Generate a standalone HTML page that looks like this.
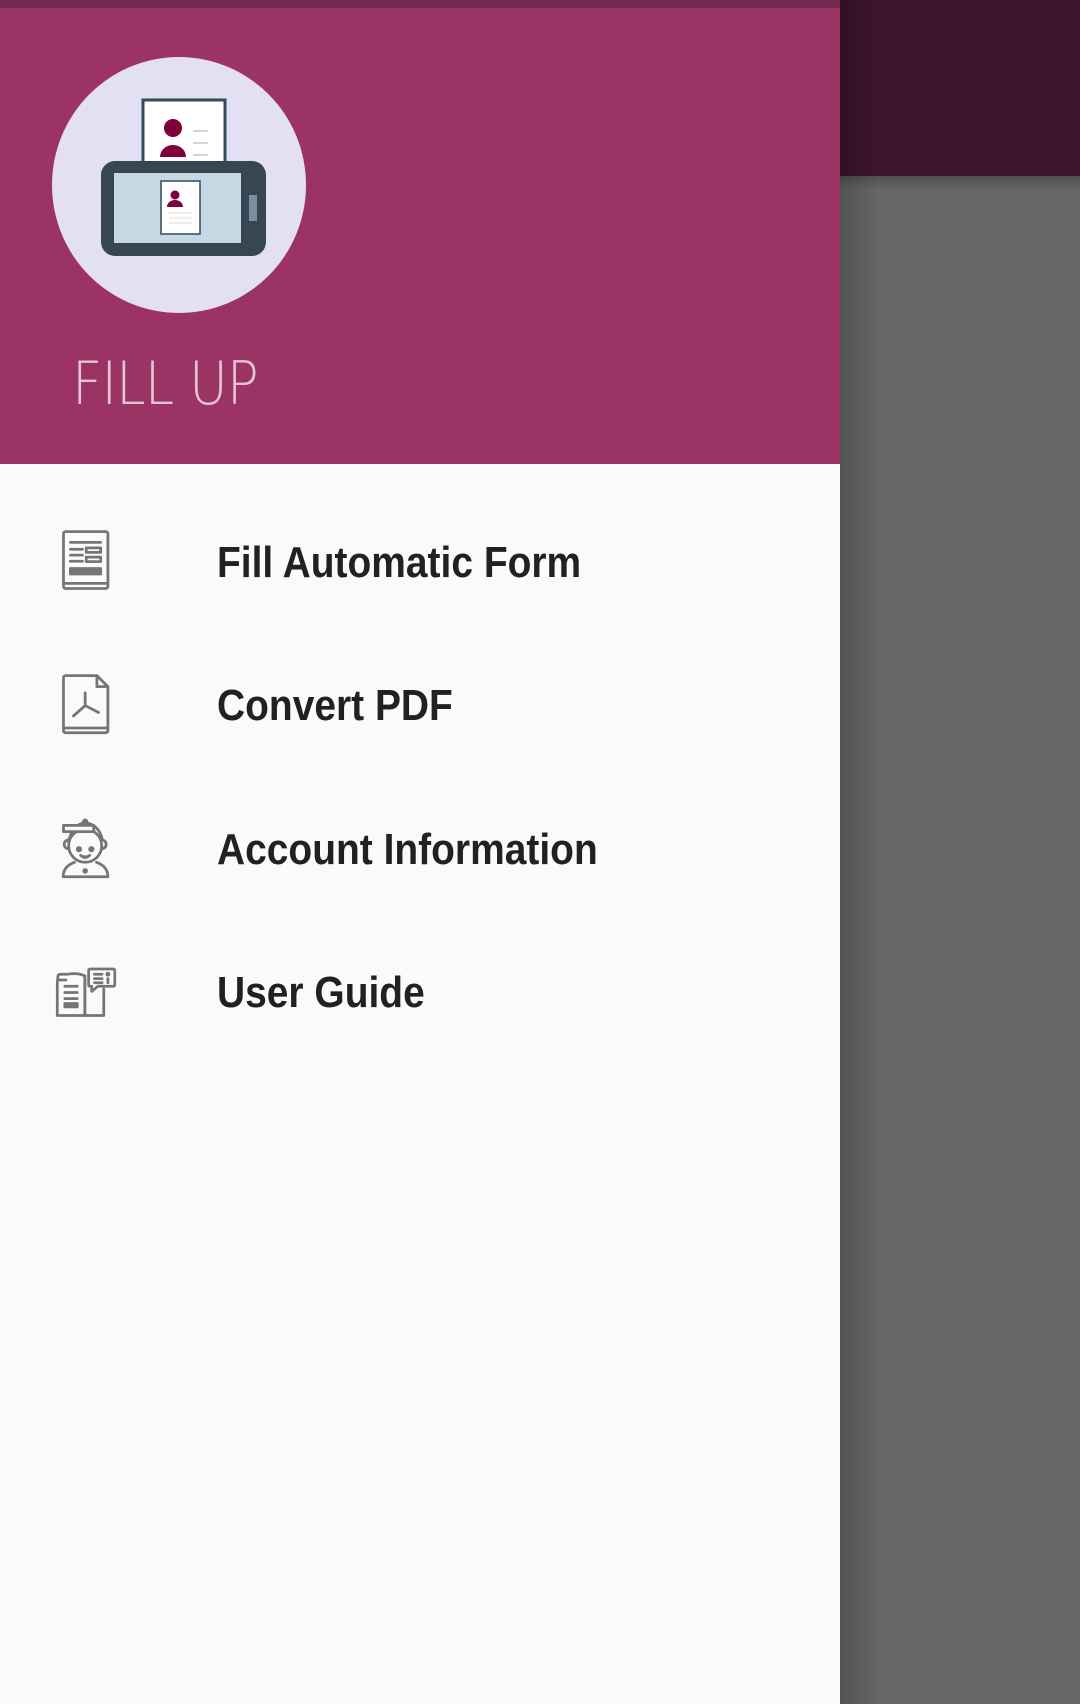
<!DOCTYPE html>
<html><head><meta charset="utf-8"><style>
html,body{margin:0;padding:0}
body{width:1080px;height:1704px;position:relative;overflow:hidden;background:#666;font-family:"Liberation Sans",sans-serif}
.abs{position:absolute}
.item{position:absolute;left:217px;font-size:44px;font-weight:bold;color:#212121;transform:scaleX(0.885);transform-origin:left;line-height:1;white-space:nowrap}
</style></head><body>
<div class="abs" style="left:840px;top:0;width:240px;height:176px;background:#3d142c"></div>
<div class="abs" style="left:840px;top:176px;width:240px;height:14px;background:linear-gradient(#505050,#666)"></div>
<div class="abs" style="left:840px;top:0;width:40px;height:1704px;background:linear-gradient(90deg,rgba(0,0,0,0.18),rgba(0,0,0,0))"></div>
<div class="abs" style="left:0;top:0;width:840px;height:1704px;background:#fafafa"></div>
<div class="abs" style="left:0;top:0;width:840px;height:464px;background:#9b3464"></div>
<div class="abs" style="left:0;top:0;width:840px;height:8px;background:#742b52"></div>
<div class="abs" style="left:52px;top:57px;width:254px;height:256px;border-radius:50%;background:#e3e0f3"></div>
<svg class="abs" style="left:0;top:0" width="320" height="320" viewBox="0 0 320 320">
<rect x="143" y="100" width="82" height="64" fill="#fff" stroke="#34495a" stroke-width="3"/>
<circle cx="173" cy="128" r="9" fill="#80003c"/>
<path d="M160 157 a13 12 0 0 1 26 0z" fill="#80003c"/>
<g stroke="#aaa" stroke-width="1"><line x1="193" y1="131" x2="208" y2="131"/><line x1="193" y1="143" x2="208" y2="143"/><line x1="193" y1="155" x2="208" y2="155"/></g>
<rect x="101" y="161" width="165" height="95" rx="14" fill="#364753"/>
<rect x="114" y="173" width="127" height="70" fill="#c6d8e4"/>
<rect x="161" y="181" width="39" height="53" fill="#fff" stroke="#34495a" stroke-width="1.5"/>
<circle cx="175" cy="195" r="4.5" fill="#80003c"/>
<path d="M167 207 a8 7 0 0 1 16 0z" fill="#80003c"/>
<g stroke="#ddd" stroke-width="1"><line x1="169" y1="213" x2="192" y2="213"/><line x1="169" y1="218" x2="192" y2="218"/><line x1="169" y1="223" x2="192" y2="223"/></g>
<rect x="249" y="195" width="8" height="26" fill="#7a909c"/>
</svg>
<div class="abs" style="left:72px;top:354px;font-size:60px;color:#e6c3d6;transform:scaleX(0.88);transform-origin:left;line-height:1;letter-spacing:-1px;font-family:'DejaVu Sans',sans-serif;font-weight:200">FILL UP</div>

<svg class="abs" style="left:40px;top:480px" width="90" height="540" viewBox="0 0 261 1568" fill="none" stroke="#757575" stroke-width="8" stroke-linejoin="round" stroke-linecap="round">
<rect x="68" y="150" width="129" height="165" rx="6"/>
<line x1="68" y1="300" x2="197" y2="300"/>
<line x1="88" y1="181" x2="176" y2="181"/>
<line x1="88" y1="201" x2="123" y2="201"/><line x1="88" y1="218" x2="123" y2="218"/><line x1="88" y1="236" x2="123" y2="236"/>
<rect x="134" y="197" width="42" height="13"/><rect x="134" y="224" width="42" height="13"/>
<rect x="88" y="257" width="88" height="16" fill="#757575"/>
<path d="M74 568 H165 L197 600 V728 a6 6 0 0 1 -6 6 H74 a6 6 0 0 1 -6 -6 V574 a6 6 0 0 1 6 -6z"/>
<path d="M165 568 V600 H197"/>
<line x1="68" y1="720" x2="197" y2="720"/>
<path d="M131 618 V655 L97 685 M131 655 L170 675"/>
<circle cx="131" cy="1062" r="48"/>
<path d="M83 1050 q10 -50 48 -55 q40 5 50 50" />
<rect x="68" y="1003" width="88" height="18" fill="#fafafa"/>
<circle cx="131" cy="992" r="5" fill="#757575"/>
<path d="M83 1045 a12 12 0 0 0 0 26 M179 1045 a12 12 0 0 1 0 26"/>
<circle cx="113" cy="1072" r="5" fill="#757575"/><circle cx="149" cy="1072" r="5" fill="#757575"/>
<path d="M118 1090 q13 12 26 0" fill="#757575"/>
<path d="M100 1110 q-33 12 -33 42 h130 q0 -30 -33 -42"/>
<circle cx="131" cy="1135" r="4" fill="#757575"/>
<path d="M55 1452 h20 M50 1460 V1555 h80 V1440 q-20 -10 -50 -5 h-22 a6 6 0 0 0 -6 6z"/>
<path d="M130 1555 h55 V1478 M130 1440 V1555"/>
<line x1="72" y1="1470" x2="108" y2="1470"/><line x1="72" y1="1488" x2="108" y2="1488"/><line x1="72" y1="1506" x2="108" y2="1506"/>
<rect x="72" y="1520" width="36" height="10" fill="#757575"/>
<path d="M145 1420 h68 a4 4 0 0 1 4 4 v42 a4 4 0 0 1 -4 4 h-45 l-18 15 v-15 h-5 a4 4 0 0 1 -4 -4 v-42 a4 4 0 0 1 4 -4z"/>
<line x1="158" y1="1435" x2="180" y2="1435"/><line x1="158" y1="1448" x2="180" y2="1448"/><line x1="158" y1="1460" x2="180" y2="1460"/>
<circle cx="197" cy="1435" r="3" fill="#757575"/><line x1="197" y1="1448" x2="197" y2="1460"/>
</svg>

<div class="item" style="top:541px">Fill Automatic Form</div>
<div class="item" style="top:684px">Convert PDF</div>
<div class="item" style="top:828px">Account Information</div>
<div class="item" style="top:971px">User Guide</div>
</body></html>
